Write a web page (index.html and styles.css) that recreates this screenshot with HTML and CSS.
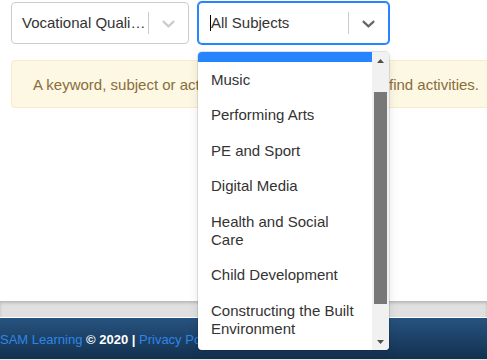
FILE: index.html
```html
<!DOCTYPE html>
<html lang="en">
<head>
<meta charset="utf-8">
<title>Find activities</title>
<link rel="stylesheet" href="styles.css">
</head>
<body>
<div class="page">
  <main class="content">
    <div class="filters">
      <div class="select">
        <div class="select-value">Vocational Qualifications</div>
        <span class="select-sep"></span>
        <div class="select-ind">
          <svg class="chev" viewBox="0 0 20 20" aria-hidden="true"><path d="M4.516 7.548c0.436-0.446 1.043-0.481 1.576 0l3.908 3.747 3.908-3.747c0.533-0.481 1.141-0.446 1.574 0 0.436 0.445 0.408 1.197 0 1.615-0.406 0.418-4.695 4.502-4.695 4.502-0.217 0.223-0.502 0.335-0.787 0.335s-0.57-0.112-0.789-0.335c0 0-4.287-4.084-4.695-4.502s-0.436-1.17 0-1.615z"/></svg>
        </div>
      </div>
      <div class="select-wrap">
        <div class="select select--focused">
          <div class="select-value select-value--input"><span class="caret"></span>All Subjects</div>
          <span class="select-sep"></span>
          <div class="select-ind">
            <svg class="chev" viewBox="0 0 20 20" aria-hidden="true"><path d="M4.516 7.548c0.436-0.446 1.043-0.481 1.576 0l3.908 3.747 3.908-3.747c0.533-0.481 1.141-0.446 1.574 0 0.436 0.445 0.408 1.197 0 1.615-0.406 0.418-4.695 4.502-4.695 4.502-0.217 0.223-0.502 0.335-0.787 0.335s-0.57-0.112-0.789-0.335c0 0-4.287-4.084-4.695-4.502s-0.436-1.17 0-1.615z"/></svg>
          </div>
        </div>
        <div class="menu">
          <div class="menu-list">
            <div class="menu-items">
              <div class="option option--selected">All Subjects</div>
              <div class="option">Music</div>
              <div class="option">Performing Arts</div>
              <div class="option">PE and Sport</div>
              <div class="option">Digital Media</div>
              <div class="option">Health and Social Care</div>
              <div class="option">Child Development</div>
              <div class="option">Constructing the Built Environment</div>
              <div class="option">Engineering</div>
              <div class="option">Hospitality</div>
            </div>
          </div>
          <div class="scrollbar">
            <div class="sb-btn"><svg class="sb-arrow" viewBox="0 0 7 4"><polygon points="3.5,0 7,4 0,4"/></svg></div>
            <div class="sb-track"><div class="sb-thumb"></div></div>
            <div class="sb-btn"><svg class="sb-arrow" viewBox="0 0 7 4"><polygon points="0,0 7,0 3.5,4"/></svg></div>
          </div>
        </div>
      </div>
    </div>
    <div class="alert">A keyword, subject or activity type must be chosen to find activities.</div>
  </main>
  <div class="footer-band"></div>
  <footer class="footer">
    <a class="footer-link" href="#">SAM Learning</a> <span class="footer-copy">&copy; 2020 |</span> <a class="footer-link" href="#">Privacy Policy</a> <span class="footer-copy">|</span> <a class="footer-link" href="#">Terms of Use</a>
  </footer>
  <div class="footer-edge"></div>
</div>
</body>
</html>
```

FILE: styles.css
```css
* {
  box-sizing: border-box;
}

html,
body {
  margin: 0;
  padding: 0;
  overflow: hidden;
}

body {
  width: 487px;
  height: 360px;
  background: #fff;
  font-family: "Liberation Sans", Arial, sans-serif;
}

.page {
  display: flex;
  flex-direction: column;
  height: 360px;
}

.content {
  height: 301px;
  flex: none;
  padding: 2px 0 0 11px;
  background: #fff;
}

.filters {
  display: flex;
  align-items: flex-start;
  gap: 9px;
}

.select {
  display: flex;
  width: 178px;
  height: 42px;
  border: 1px solid #ccc;
  border-radius: 4px;
  background: #fff;
}

.select-wrap {
  position: relative;
}

.select--focused {
  width: 191px;
  border-color: #2684ff;
  box-shadow: 0 0 0 1px #2684ff;
}

.select-value {
  flex: 1;
  min-width: 0;
  padding: 0 1px 0 10px;
  font-size: 15px;
  line-height: 40px;
  color: #333;
  white-space: nowrap;
  overflow: hidden;
  text-overflow: ellipsis;
}

.select-value--input {
  padding-left: 11px;
}

.caret {
  display: inline-block;
  width: 1px;
  height: 16px;
  background: #000;
  vertical-align: -3px;
}

.select-sep {
  width: 1px;
  margin: 9px 0;
  background: #ccc;
  flex: none;
}

.select-ind {
  width: 39px;
  flex: none;
  display: flex;
  align-items: center;
  justify-content: center;
}

.chev {
  width: 21px;
  height: 21px;
  fill: #ccc;
}

.select--focused .chev {
  fill: #666;
}

.menu {
  position: absolute;
  top: calc(100% + 8px);
  left: 0;
  z-index: 10;
  width: 191px;
  height: 298px;
  display: flex;
  background: #fff;
  border-radius: 4px;
  overflow: hidden;
  box-shadow: 0 0 0 1px rgba(0, 0, 0, 0.1), 0 4px 11px rgba(0, 0, 0, 0.1);
}

.menu-list {
  flex: 1;
  min-width: 0;
  overflow: hidden;
}

.menu-items {
  margin-top: -25.5px;
}

.option {
  padding: 8.75px 12px 8.75px 13px;
  font-size: 15px;
  line-height: 18px;
  color: #333;
}

.option--selected {
  padding-top: 4px;
  padding-bottom: 13.5px;
  background: #2684ff;
  color: #fff;
}

.scrollbar {
  width: 17px;
  flex: none;
  display: flex;
  flex-direction: column;
  background: #f1f1f1;
}

.sb-btn {
  height: 17px;
  flex: none;
  display: flex;
  align-items: center;
  justify-content: center;
}

.sb-arrow {
  width: 7px;
  height: 4px;
  fill: #505050;
}

.sb-track {
  flex: 1;
  padding: 23px 2px 0;
}

.sb-thumb {
  height: 212px;
  background: #787878;
}

.alert {
  width: 520px;
  margin-top: 16px;
  padding: 15px 21px 14px;
  border: 1px solid #faebcc;
  border-radius: 4px;
  background: #fcf8e3;
  color: #8a6d3b;
  font-size: 15px;
  line-height: 17px;
  white-space: nowrap;
}

.footer-band {
  height: 17px;
  flex: none;
  background: #e0e0e0;
  border-bottom: 1px solid #fff;
  box-shadow: inset 0 2px 3px rgba(0, 0, 0, 0.18);
}

.footer {
  height: 41px;
  flex: none;
  padding-top: 12.5px;
  background: linear-gradient(#26537f, #13304f);
  font-size: 13px;
  line-height: 17px;
  white-space: nowrap;
  color: #fff;
}

.footer-link {
  color: #2f86e6;
  text-decoration: none;
}

.footer-copy {
  font-weight: bold;
  color: #fff;
}

.footer-edge {
  height: 1px;
  flex: none;
  background: #e6e6e6;
}
```
